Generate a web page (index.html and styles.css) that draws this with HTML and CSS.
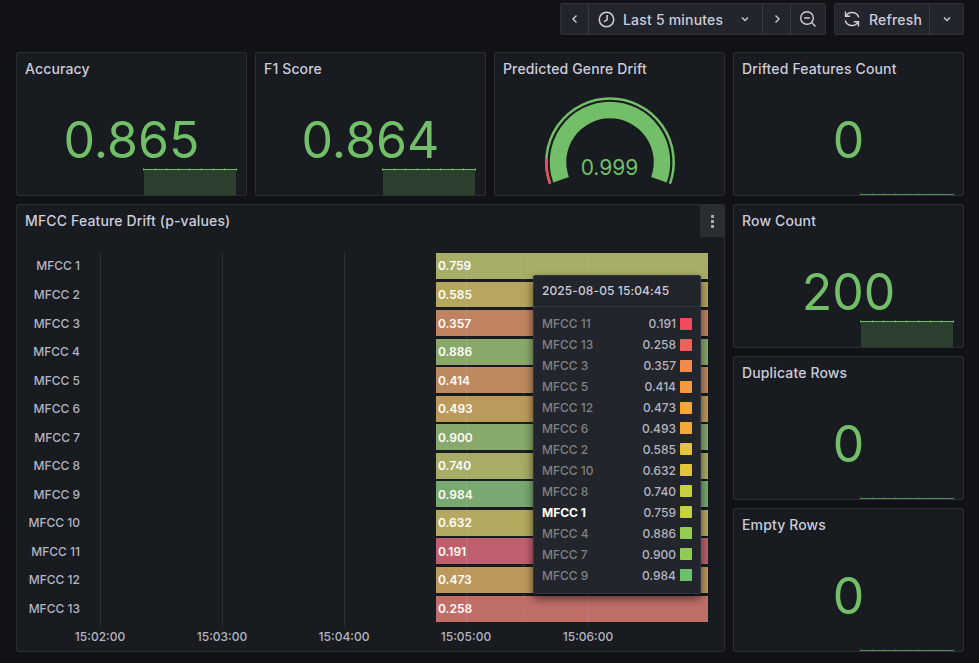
FILE: index.html
```html
<!DOCTYPE html>
<html lang="en">
<head>
<meta charset="utf-8">
<title>Dashboard</title>
<link rel="stylesheet" href="styles.css">
</head>
<body>
<header class="toolbar">
  <div class="btn-group">
    <button class="btn btn-nav"><svg class="ico" viewBox="0 0 16 16"><path d="M9.5 4.5 6 8l3.5 3.5"/></svg></button>
    <button class="btn btn-range">
      <svg class="ico ico-clock" viewBox="0 0 16 16"><circle cx="8" cy="8" r="6.8"/><path d="M8.6 3.8V8.4L5.6 10"/></svg>
      <span class="btn-text">Last 5 minutes</span>
      <svg class="ico ico-caret" viewBox="0 0 16 16"><path d="M5 6.5 8 9.5l3-3"/></svg>
    </button>
    <button class="btn btn-nav"><svg class="ico" viewBox="0 0 16 16"><path d="M6.5 4.5 10 8l-3.500 3.500"/></svg></button>
    <button class="btn btn-zoom"><svg class="ico ico-zoom" viewBox="0 0 18 18"><circle cx="8" cy="8" r="6.300"/><path d="M5.200 8h5.600M12.600 12.600 16.500 16.500"/></svg></button>
  </div>
  <div class="btn-group">
    <button class="btn btn-refresh">
      <svg class="ico ico-sync" viewBox="1 1 16 16"><path d="M2.500 1.500v4.700h4.700M2.900 6.200A7 7 0 0 1 15.800 7.500M15.500 16.500v-4.700h-4.700M15.100 11.800A7 7 0 0 1 2.200 10.500"/></svg>
      <span class="btn-text">Refresh</span>
    </button>
    <button class="btn btn-caret"><svg class="ico" viewBox="0 0 16 16"><path d="M5 6.500 8 9.500l3-3"/></svg></button>
  </div>
</header>

<main class="dashboard">
  <section class="panel">
    <h2 class="panel-title">Accuracy</h2>
    <div class="stat"><span class="stat-value">0.865</span></div>
    <div class="spark"></div>
  </section>
  <section class="panel">
    <h2 class="panel-title">F1 Score</h2>
    <div class="stat"><span class="stat-value">0.864</span></div>
    <div class="spark"></div>
  </section>
  <section class="panel">
    <h2 class="panel-title">Predicted Genre Drift</h2>
    <div class="gauge-wrap">
      <svg class="gauge" viewBox="-70 -68 140 96">
        <path class="gauge-ring" d="M-59.900 21.800A63.700 63.700 0 1 1 59.900 21.800"/>
        <path class="gauge-ring-red" d="M-59.900 21.800A63.700 63.700 0 0 1 -63.500 -4"/>
        <path class="gauge-band" d="M-48.900 17.800A52 52 0 1 1 48.900 17.800"/>
        <text class="gauge-text" x="-0.500" y="13">0.999</text>
      </svg>
    </div>
  </section>
  <section class="panel">
    <h2 class="panel-title">Drifted Features Count</h2>
    <div class="stat"><span class="stat-value">0</span></div>
    <div class="spark spark-low"></div>
  </section>

  <section class="panel panel-chart">
    <h2 class="panel-title">MFCC Feature Drift (p-values)</h2>
    <button class="panel-menu" aria-label="Menu"><i></i><i></i><i></i></button>
    <div class="chart">
      <div class="chart-main">
        <ul class="y-axis">
          <li>MFCC 1</li><li>MFCC 2</li><li>MFCC 3</li><li>MFCC 4</li><li>MFCC 5</li><li>MFCC 6</li><li>MFCC 7</li><li>MFCC 8</li><li>MFCC 9</li><li>MFCC 10</li><li>MFCC 11</li><li>MFCC 12</li><li>MFCC 13</li>
        </ul>
        <div class="plot">
          <div class="bars">
            <div class="bar c759">0.759</div>
            <div class="bar c585">0.585</div>
            <div class="bar c357">0.357</div>
            <div class="bar c886">0.886</div>
            <div class="bar c414">0.414</div>
            <div class="bar c493">0.493</div>
            <div class="bar c900">0.900</div>
            <div class="bar c740">0.740</div>
            <div class="bar c984">0.984</div>
            <div class="bar c632">0.632</div>
            <div class="bar c191">0.191</div>
            <div class="bar c473">0.473</div>
            <div class="bar c258">0.258</div>
          </div>
          <div class="gridlines"><i></i><i></i><i></i><i></i><i></i></div>
          <div class="crosshair"></div>
        </div>
      </div>
      <div class="x-axis"><span>15:02:00</span><span>15:03:00</span><span>15:04:00</span><span>15:05:00</span><span>15:06:00</span></div>
    </div>
    <aside class="tooltip">
      <div class="tooltip-head">2025-08-05 15:04:45</div>
      <ul class="tooltip-list">
        <li><span class="t-name">MFCC 11</span><span class="t-val">0.191</span><i class="sw s191"></i></li>
        <li><span class="t-name">MFCC 13</span><span class="t-val">0.258</span><i class="sw s258"></i></li>
        <li><span class="t-name">MFCC 3</span><span class="t-val">0.357</span><i class="sw s357"></i></li>
        <li><span class="t-name">MFCC 5</span><span class="t-val">0.414</span><i class="sw s414"></i></li>
        <li><span class="t-name">MFCC 12</span><span class="t-val">0.473</span><i class="sw s473"></i></li>
        <li><span class="t-name">MFCC 6</span><span class="t-val">0.493</span><i class="sw s493"></i></li>
        <li><span class="t-name">MFCC 2</span><span class="t-val">0.585</span><i class="sw s585"></i></li>
        <li><span class="t-name">MFCC 10</span><span class="t-val">0.632</span><i class="sw s632"></i></li>
        <li><span class="t-name">MFCC 8</span><span class="t-val">0.740</span><i class="sw s740"></i></li>
        <li class="active"><span class="t-name">MFCC 1</span><span class="t-val">0.759</span><i class="sw s740"></i></li>
        <li><span class="t-name">MFCC 4</span><span class="t-val">0.886</span><i class="sw s886"></i></li>
        <li><span class="t-name">MFCC 7</span><span class="t-val">0.900</span><i class="sw s900"></i></li>
        <li><span class="t-name">MFCC 9</span><span class="t-val">0.984</span><i class="sw s984"></i></li>
      </ul>
    </aside>
  </section>

  <section class="panel">
    <h2 class="panel-title">Row Count</h2>
    <div class="stat"><span class="stat-value">200</span></div>
    <div class="spark"></div>
  </section>
  <section class="panel">
    <h2 class="panel-title">Duplicate Rows</h2>
    <div class="stat"><span class="stat-value">0</span></div>
    <div class="spark spark-low"></div>
  </section>
  <section class="panel">
    <h2 class="panel-title">Empty Rows</h2>
    <div class="stat"><span class="stat-value">0</span></div>
    <div class="spark spark-low"></div>
  </section>
</main>
</body>
</html>
```

FILE: styles.css
```css
* { box-sizing: border-box; }
html, body { height: 100%; }
body {
  margin: 0;
  overflow: hidden;
  background: #111217;
  color: #ccccdc;
  font-family: Inter, "Liberation Sans", sans-serif;
  font-size: 12px;
}
ul { list-style: none; margin: 0; padding: 0; }

/* toolbar */
.toolbar {
  display: flex;
  justify-content: flex-end;
  gap: 8px;
  height: 35px;
  padding: 3px 15px 0 0;
}
.btn-group {
  display: flex;
  height: 32px;
  background: #22252b;
  border: 1px solid #2e3136;
  border-radius: 2px;
}
.btn {
  display: flex;
  align-items: center;
  height: 100%;
  margin: 0;
  padding: 0;
  background: none;
  border: 0;
  border-left: 1px solid #383b41;
  color: #ccccdc;
  font: 500 14px Inter, "Liberation Sans", sans-serif;
  letter-spacing: 0.2px;
}
.btn:first-child { border-left: 0; }
.btn-nav { width: 28px; justify-content: center; }
.btn-group > .btn-nav:first-child { width: 27px; }
.btn-range { width: 174px; padding-left: 9px; }
.btn-zoom { width: 35px; justify-content: center; }
.btn-refresh { width: 94px; padding-left: 9px; }
.btn-caret { width: 34px; justify-content: center; }
.btn-text { white-space: nowrap; }
.btn-range .btn-text { margin-left: 8px; }
.btn-refresh .btn-text { margin-left: 9px; }

.ico {
  display: block;
  width: 16px;
  height: 16px;
  flex: none;
  fill: none;
  stroke: #ccccdc;
  stroke-width: 1.400;
}
.ico-clock { width: 17px; height: 17px; }
.ico-caret { margin-left: 14px; }
.ico-zoom { width: 18px; height: 18px; }

/* dashboard */
.dashboard {
  display: grid;
  grid-template-columns: repeat(4, 1fr);
  grid-template-rows: repeat(4, 144px);
  gap: 8px;
  margin-top: 17px;
  padding: 0 15px 0 16px;
}
.panel {
  position: relative;
  display: flex;
  flex-direction: column;
  min-width: 0;
  overflow: hidden;
  background: #181b1f;
  border: 1px solid #2b2e33;
  border-radius: 2px;
}
.panel-title {
  flex: none;
  height: 33px;
  margin: 0;
  padding: 0 8px;
  color: #ccccdc;
  font-size: 14px;
  font-weight: 500;
  letter-spacing: 0.14px;
  line-height: 32px;
  white-space: nowrap;
}
.stat {
  flex: 1;
  display: flex;
  align-items: center;
  justify-content: center;
  padding-bottom: 2px;
}
.stat-value {
  color: #73bf69;
  font-size: 50px;
  font-weight: 400;
  line-height: 1;
}
.spark {
  position: absolute;
  right: 9px;
  bottom: 0;
  width: 94px;
  height: 26px;
}
.spark::before {
  content: "";
  position: absolute;
  z-index: 1;
  left: 0;
  right: 0;
  top: -1px;
  height: 3px;
  background:
    linear-gradient(#73bf69, #73bf69) 0 1px / 100% 1px no-repeat,
    repeating-linear-gradient(90deg, #47703f 0, #47703f 1px, transparent 1px, transparent 11.600px);
}
.spark::after {
  content: "";
  position: absolute;
  left: 1px;
  right: 1px;
  top: 1px;
  bottom: 0;
  background: #2d3f2e;
}
.spark-low { height: 1px; bottom: 0; }
.spark-low::before {
  background:
    linear-gradient(#4f8f49, #4f8f49) 0 1px / 100% 1px no-repeat,
    repeating-linear-gradient(90deg, #34602f 0, #34602f 1px, transparent 1px, transparent 11.600px);
}
.spark-low::after { display: none; }

/* gauge */
.gauge-wrap { display: flex; justify-content: center; padding-top: 8px; }
.gauge { display: block; width: 140px; height: 96px; flex: none; }
.gauge-ring, .gauge-ring-red, .gauge-band { fill: none; }
.gauge-ring { stroke: #73bf69; stroke-width: 2.500; }
.gauge-ring-red { stroke: #f2495c; stroke-width: 2.500; }
.gauge-band { stroke: #73bf69; stroke-width: 16.500; }
.gauge-text {
  fill: #73bf69;
  font-size: 21px;
  font-family: Inter, "Liberation Sans", sans-serif;
  text-anchor: middle;
}

/* chart */
.panel-chart { grid-column: 1 / span 3; grid-row: 2 / span 3; }
.panel-menu {
  position: absolute;
  top: 0;
  right: 0;
  display: flex;
  flex-direction: column;
  align-items: center;
  justify-content: center;
  gap: 2px;
  width: 24px;
  height: 32px;
  padding: 0;
  background: #2a2d32;
  border: 0;
  border-radius: 0 0 0 2px;
}
.panel-menu i { width: 3px; height: 3px; background: #a9aab4; }
.chart { padding: 15px 0 0 0; }
.chart-main { display: flex; height: 368.500px; margin-bottom: 0.500px; }
.y-axis {
  flex: none;
  display: grid;
  grid-template-rows: repeat(13, 1fr);
  gap: 2.600px;
  width: 83px;
  padding-right: 20px;
  color: #b4b5c1;
  font-size: 12px;
  font-weight: 500;
  text-align: right;
}
.y-axis li { display: flex; align-items: center; justify-content: flex-end; white-space: nowrap; }
.plot { position: relative; flex: 1; margin-right: 16px; }
.bars {
  display: grid;
  grid-template-rows: repeat(13, 1fr);
  gap: 2.600px;
  height: 100%;
  padding-left: 336px;
}
.bar {
  display: flex;
  align-items: center;
  padding-left: 2px;
  color: #fff;
  font-size: 12px;
  font-weight: 600;
}
.c759 { background: #a9ae67; }
.c585 { background: #b7a65d; }
.c357 { background: #bf8361; }
.c886 { background: #8aa86c; }
.c414 { background: #bd8a5f; }
.c493 { background: #bb9a5b; }
.c900 { background: #88a96c; }
.c740 { background: #a9ac67; }
.c984 { background: #79a871; }
.c632 { background: #b3a95f; }
.c191 { background: #c05f6e; }
.c473 { background: #bc985c; }
.c258 { background: #bf6e68; }
.gridlines {
  position: absolute;
  left: 0;
  top: 0;
  bottom: -4px;
  display: flex;
}
.gridlines i {
  flex: none;
  width: 122px;
  border-left: 1px solid rgba(204, 204, 220, 0.12);
}
.crosshair {
  position: absolute;
  left: 423px;
  top: 0;
  bottom: 0;
  border-left: 1px dashed rgba(150, 150, 160, 0.3);
}
.x-axis {
  display: flex;
  margin: 3px 0 0 22px;
  color: #b4b5c1;
  font-size: 12px;
  font-weight: 500;
}
.x-axis span {
  flex: none;
  width: 122px;
  height: 24px;
  line-height: 24px;
  text-align: center;
}

/* tooltip */
.tooltip {
  position: absolute;
  left: 516px;
  top: 70px;
  width: 168px;
  height: 319px;
  background: #22252b;
  border: 1px solid #33363c;
  border-radius: 2px;
  box-shadow: 0 4px 10px rgba(0, 0, 0, 0.6);
}
.tooltip-head {
  height: 31px;
  padding-left: 8px;
  border-bottom: 1px solid #33363c;
  color: #ccccdc;
  font-size: 12px;
  font-weight: 500;
  letter-spacing: 0.1px;
  line-height: 29px;
  white-space: nowrap;
}
.tooltip-list { padding: 6.300px 8px 0; }
.tooltip-list li {
  display: flex;
  align-items: center;
  height: 20.950px;
}
.t-name { flex: 1; color: #7f8188; font-weight: 500; }
.t-val { color: #b5b6c2; font-weight: 500; }
.sw { flex: none; width: 12px; height: 12px; margin-left: 4px; border-radius: 1px; }
.active .t-name { color: #fff; font-weight: 700; }
.s191 { background: #f2495c; }
.s258 { background: #f2605a; }
.s357 { background: #f58b4a; }
.s414 { background: #f5993f; }
.s473 { background: #f5a83a; }
.s493 { background: #f2a93a; }
.s585 { background: #e5c33a; }
.s632 { background: #e0c83a; }
.s740 { background: #c5d13f; }
.s886 { background: #97cc52; }
.s900 { background: #93cc55; }
.s984 { background: #6cc068; }
```
